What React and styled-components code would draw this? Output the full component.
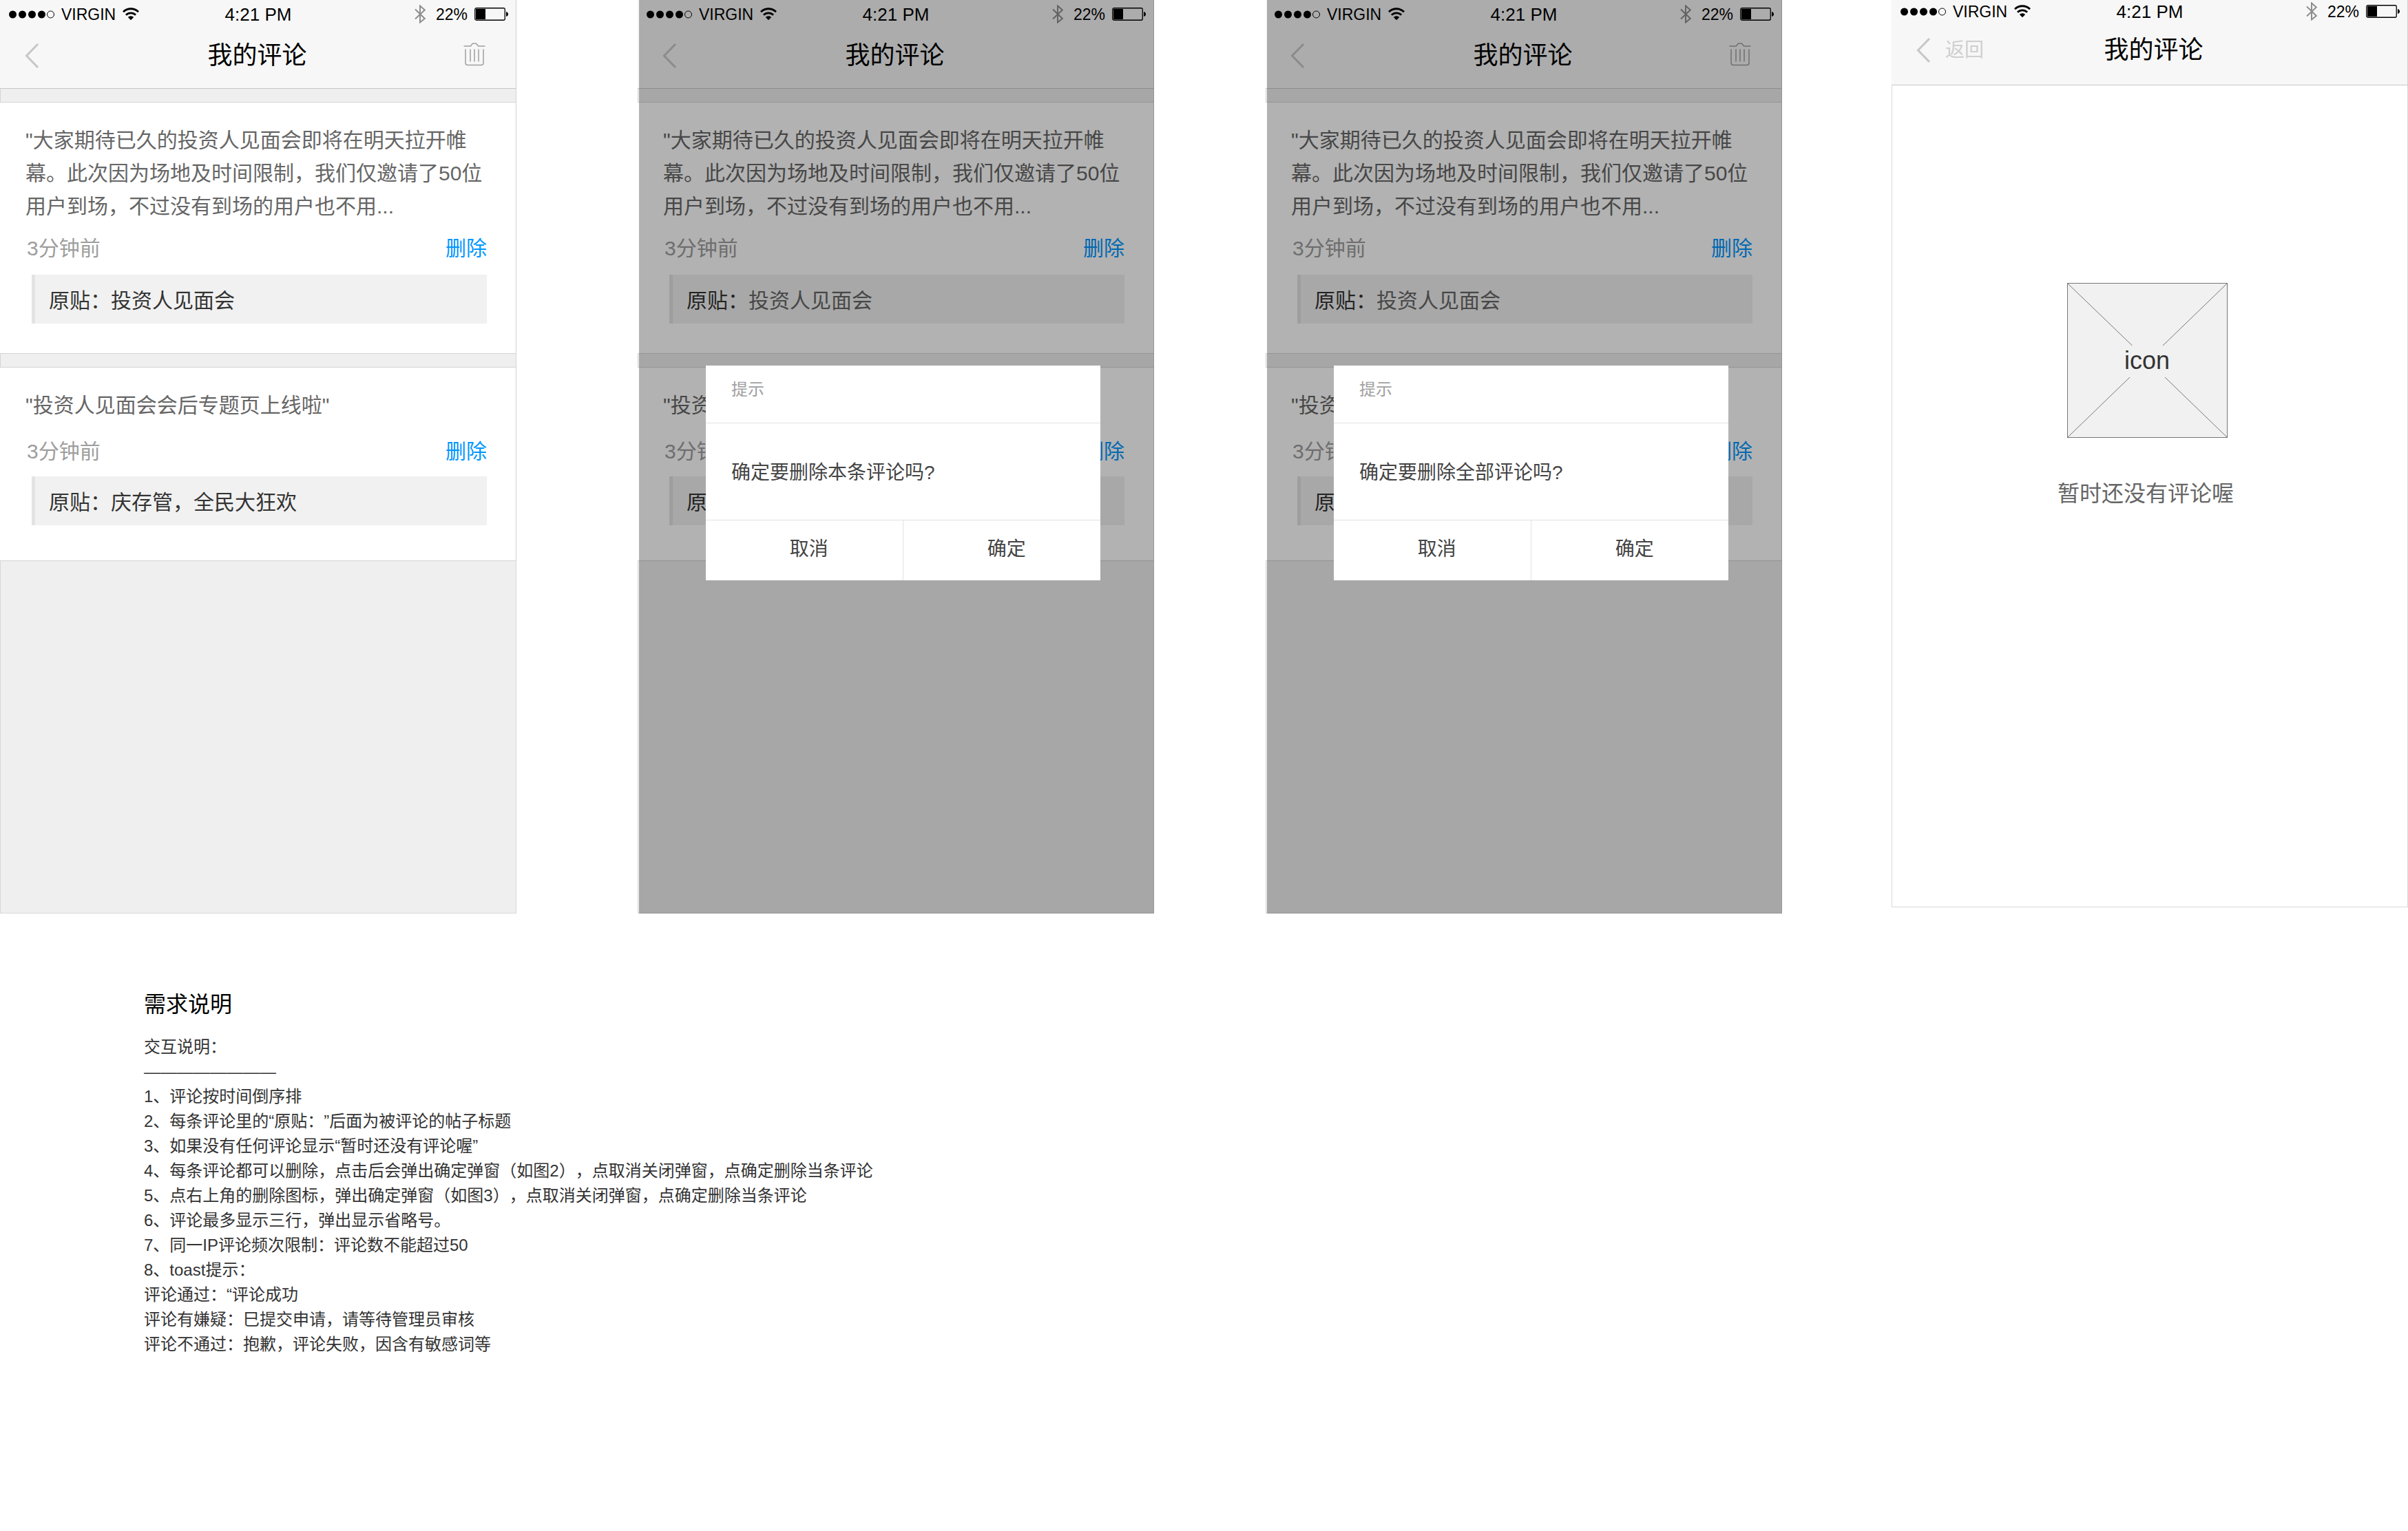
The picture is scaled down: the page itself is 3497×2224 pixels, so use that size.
import React from "react";
import styled, { createGlobalStyle } from "styled-components";

const GlobalStyle = createGlobalStyle`
  *, *::before, *::after { box-sizing: border-box; }
  body {
    margin: 0;
    background: #fff;
    color: #333;
    font-family: "Liberation Sans", "Noto Sans CJK SC", sans-serif;
    text-spacing-trim: space-all;
  }
  h1, h2, p, ol { margin: 0; padding: 0; font-weight: 400; }
  button { margin: 0; padding: 0; border: 0; background: none; font: inherit; color: inherit; cursor: pointer; }
  svg { display: block; }
`;

const Board = styled.main`
  display: grid;
  grid-template-columns: 1fr 176px 1fr 162px 1fr 159px 1fr;
  align-items: start;
`;

const Screen = styled.section`
  grid-column: ${(p) => p.$column};
  position: relative;
  display: flex;
  flex-direction: column;
  min-height: ${(p) => p.$height}px;
  background: ${(p) => p.$background};
`;

const TopBar = styled.header`
  padding-top: ${(p) => (p.$compact ? 3 : 7)}px;
  height: ${(p) => (p.$compact ? 124 : 129)}px;
  background: #f7f7f7;
  border-bottom: 1px solid #c8c8c8;
  border-right: 1px solid #d0d0d0;
`;

const StatusRow = styled.div`
  display: grid;
  grid-template-columns: 1fr auto 1fr;
  align-items: center;
  height: 26px;
  padding: 0 11px 0 12px;
  line-height: 26px;
  font-size: 23px;
  color: #000;
`;

const StatusGroup = styled.div`
  display: flex;
  align-items: center;
  justify-content: ${(p) => (p.$end ? "flex-end" : "flex-start")};
  gap: 10px;
`;

const Clock = styled.time`
  font-size: 26px;
`;

const NavRow = styled.div`
  display: grid;
  grid-template-columns: 1fr auto 1fr;
  align-items: center;
  height: 54px;
  margin-top: ${(p) => (p.$compact ? 17 : 21)}px;
  padding: ${(p) => (p.$compact ? "0 24px 0 36px" : "0 38px 0 36px")};
`;

const BackButton = styled.button`
  display: flex;
  align-items: center;
  justify-self: start;
  gap: 20px;
  font-size: 28px;
  line-height: 40px;
  color: #cfcfcf;
`;

const TrashButton = styled.button`
  grid-column: 3;
  justify-self: end;
  padding: 0 6px 4px 0;
`;

const Title = styled.h1`
  font-size: 36px;
  line-height: 54px;
  color: #000;
`;

const Strip = styled.div`
  height: 20px;
  background: #efefef;
  border: solid #d4d4d4;
  border-width: 0 1px 1px;
`;

const Card = styled.article`
  padding: 31px 42px ${(p) => p.$bottom}px 37px;
  background: #fff;
  border: solid #d4d4d4;
  border-width: 0 1px 1px 0;
`;

const CommentText = styled.p`
  font-size: 30px;
  line-height: 48px;
  color: #666;
`;

const MetaRow = styled.div`
  display: flex;
  justify-content: space-between;
  margin: ${(p) => p.$top}px 0 ${(p) => p.$bottom}px 2px;
  font-size: 30px;
  line-height: 48px;
  color: #9e9e9e;
`;

const DeleteButton = styled.button`
  color: #0096ff;
`;

const Origin = styled.p`
  height: 71px;
  margin-left: 9px;
  padding: 14px 0 0 20px;
  background: #f1f1f1;
  border-left: 5px solid #e3e3e3;
  font-size: 30px;
  line-height: 48px;
  color: #333;
`;

const OriginTitle = styled.span`
  color: ${(p) => (p.$muted ? "#666" : "inherit")};
`;

const Remainder = styled.div`
  flex: 1;
  background: #efefef;
  border: 1px solid #d8d8d8;
  border-top: 0;
`;

const Overlay = styled.div`
  position: absolute;
  inset: 0 0 0 2px;
  padding: 531px 78px 0 97px;
  background: rgba(0, 0, 0, 0.3);
`;

const Dialog = styled.div`
  background: #fff;
  color: #444;
  font-size: 28px;
  line-height: 40px;
`;

const DialogTitle = styled.h2`
  height: 84px;
  padding: 15px 37px;
  border-bottom: 1px solid #e2e2e2;
  font-size: 24px;
  color: #a0a0a0;
`;

const DialogMessage = styled.p`
  height: 141px;
  padding: 52px 37px;
  border-bottom: 1px solid #e2e2e2;
`;

const DialogActions = styled.div`
  display: grid;
  grid-template-columns: 1fr 1fr;
  height: 87px;
`;

const DialogButton = styled.button`
  padding: 0 0 4px 14px;
  &:first-child { border-right: 1px solid #e2e2e2; }
`;

const EmptyState = styled.div`
  flex: 1;
  display: flex;
  flex-direction: column;
  align-items: center;
  padding: 287px 8px 0 0;
  border: 1px solid #d8d8d8;
  border-top: 0;
`;

const Placeholder = styled.div`
  position: relative;
  display: flex;
  align-items: center;
  justify-content: center;
  width: 233px;
  height: 225px;
  font-size: 36px;
  line-height: 46px;
`;

const PlaceholderArt = styled.svg`
  position: absolute;
  inset: 0;
`;

const PlaceholderLabel = styled.span`
  position: relative;
`;

const EmptyText = styled.p`
  margin-top: 57px;
  padding-right: 4px;
  font-size: 32px;
  line-height: 48px;
  color: #666;
`;

const Notes = styled.section`
  padding: 108px 209px 240px;
`;

const NotesTitle = styled.h2`
  font-size: 32px;
  line-height: 48px;
  color: #000;
`;

const NotesBody = styled.div`
  margin-top: 20px;
  font-size: 24px;
  line-height: 36px;
`;

const NotesList = styled.ol`
  list-style: none;
`;

const Signal = () => (
  <svg width="67" height="14" viewBox="0 0 67 14" aria-hidden="true">
    {[6, 20, 34, 48].map((x) => (
      <circle key={x} cx={x + 0.5} cy="7" r="5.5" fill="#000" />
    ))}
    <circle cx="61.5" cy="7" r="5" fill="none" stroke="#000" />
  </svg>
);

const Wifi = () => (
  <svg width="24" height="19" viewBox="0 0 24 19" fill="none" stroke="#000" strokeWidth="2.8" aria-hidden="true">
    <path d="M1 6.300a15.600 15.600 0 0 1 22 0" />
    <path d="M4.900 10.800a10 10 0 0 1 14.200 0" />
    <path d="M12 18.300l-4.200-4.300a6 6 0 0 1 8.400 0z" fill="#000" stroke="none" />
  </svg>
);

const Bluetooth = () => (
  <svg width="21" height="27" viewBox="0 0 21 27" fill="none" stroke="#8e8e8e" strokeWidth="2" aria-hidden="true">
    <path d="M1 6.500l13.800 13.500L8 25.500v-24l6.800 6L1 20.500" />
  </svg>
);

const Battery = () => (
  <svg width="49" height="20" viewBox="0 0 49 20" aria-hidden="true">
    <rect x="0.75" y="0.75" width="43.5" height="17.5" rx="2" fill="none" stroke="#000" strokeWidth="1.3" />
    <rect x="2" y="2" width="14" height="15" fill="#000" />
    <path d="M46 6q3 1 3 3.500t-3 3.500z" fill="#000" />
  </svg>
);

const Chevron = () => (
  <svg width="22" height="36" viewBox="0 0 22 36" fill="none" stroke="#c7c7c7" strokeWidth="3" aria-hidden="true">
    <path d="M19 1L2.500 18 19 35" />
  </svg>
);

const Trash = () => (
  <svg width="32" height="34" viewBox="0 0 32 34" fill="none" stroke="#a0a0a0" strokeWidth="1.5" aria-hidden="true">
    <path d="M0.500 5h10L13.200 1.200h5.400L21.500 5h10" />
    <path d="M3 9.500v20q0 3 3 3h20q3 0 3-3v-20M10 9.500v18M16 9.500v18M22 9.500v18" />
  </svg>
);

function Header({ compact, backLabel, trash }) {
  return (
    <TopBar $compact={compact}>
      <StatusRow>
        <StatusGroup>
          <Signal />
          <span>VIRGIN</span>
          <Wifi />
        </StatusGroup>
        <Clock>4:21 PM</Clock>
        <StatusGroup $end>
          <Bluetooth />
          <span>22%</span>
          <Battery />
        </StatusGroup>
      </StatusRow>
      <NavRow $compact={compact}>
        <BackButton type="button" aria-label="返回">
          <Chevron />
          {backLabel}
        </BackButton>
        <Title>我的评论</Title>
        {trash && (
          <TrashButton type="button" aria-label="删除全部">
            <Trash />
          </TrashButton>
        )}
      </NavRow>
    </TopBar>
  );
}

const comments = [
  {
    text: '"大家期待已久的投资人见面会即将在明天拉开帷幕。此次因为场地及时间限制，我们仅邀请了50位用户到场，不过没有到场的用户也不用...',
    origin: "投资人见面会",
    metaTop: 13,
    metaBottom: 14,
    bottom: 43,
  },
  {
    text: '"投资人见面会会后专题页上线啦"',
    origin: "庆存管，全民大狂欢",
    metaTop: 19,
    metaBottom: 12,
    bottom: 51,
  },
];

function CommentScreen({ column, trash, message }) {
  return (
    <Screen $column={column} $height={1327} $background="#efefef">
      <Header trash={trash} />
      {comments.map((c) => (
        <React.Fragment key={c.origin}>
          <Strip />
          <Card $bottom={c.bottom}>
            <CommentText>{c.text}</CommentText>
            <MetaRow $top={c.metaTop} $bottom={c.metaBottom}>
              <span>3分钟前</span>
              <DeleteButton type="button">删除</DeleteButton>
            </MetaRow>
            <Origin>
              原贴：<OriginTitle $muted={Boolean(message)}>{c.origin}</OriginTitle>
            </Origin>
          </Card>
        </React.Fragment>
      ))}
      <Remainder />
      {message && (
        <Overlay>
          <Dialog role="dialog" aria-label="提示">
            <DialogTitle>提示</DialogTitle>
            <DialogMessage>{message}</DialogMessage>
            <DialogActions>
              <DialogButton type="button">取消</DialogButton>
              <DialogButton type="button">确定</DialogButton>
            </DialogActions>
          </Dialog>
        </Overlay>
      )}
    </Screen>
  );
}

const rules = [
  "1、评论按时间倒序排",
  "2、每条评论里的“原贴：”后面为被评论的帖子标题",
  "3、如果没有任何评论显示“暂时还没有评论喔”",
  "4、每条评论都可以删除，点击后会弹出确定弹窗（如图2），点取消关闭弹窗，点确定删除当条评论",
  "5、点右上角的删除图标，弹出确定弹窗（如图3），点取消关闭弹窗，点确定删除当条评论",
  "6、评论最多显示三行，弹出显示省略号。",
  "7、同一IP评论频次限制：评论数不能超过50",
  "8、toast提示：",
  "评论通过：“评论成功",
  "评论有嫌疑：巳提交申请，请等待管理员审核",
  "评论不通过：抱歉，评论失败，因含有敏感词等",
];

export default function App() {
  return (
    <>
      <GlobalStyle />
      <Board>
        <CommentScreen column={1} trash />
        <CommentScreen column={3} message="确定要删除本条评论吗?" />
        <CommentScreen column={5} trash message="确定要删除全部评论吗?" />
        <Screen $column={7} $height={1318} $background="#fff">
          <Header compact backLabel="返回" />
          <EmptyState>
            <Placeholder>
              <PlaceholderArt width="233" height="225" viewBox="0 0 233 225" stroke="#777" aria-hidden="true">
                <rect x="0.5" y="0.5" width="232" height="224" fill="#f1f1f1" />
                <path d="M1 1L94.500 91M232 1L139 91M1 224L91 137M232 224L142 137" fill="none" />
              </PlaceholderArt>
              <PlaceholderLabel>icon</PlaceholderLabel>
            </Placeholder>
            <EmptyText>暂时还没有评论喔</EmptyText>
          </EmptyState>
        </Screen>
      </Board>
      <Notes>
        <NotesTitle>需求说明</NotesTitle>
        <NotesBody>
          <p>交互说明：</p>
          <p>————————</p>
          <NotesList>
            {rules.map((rule) => (
              <li key={rule}>{rule}</li>
            ))}
          </NotesList>
        </NotesBody>
      </Notes>
    </>
  );
}
